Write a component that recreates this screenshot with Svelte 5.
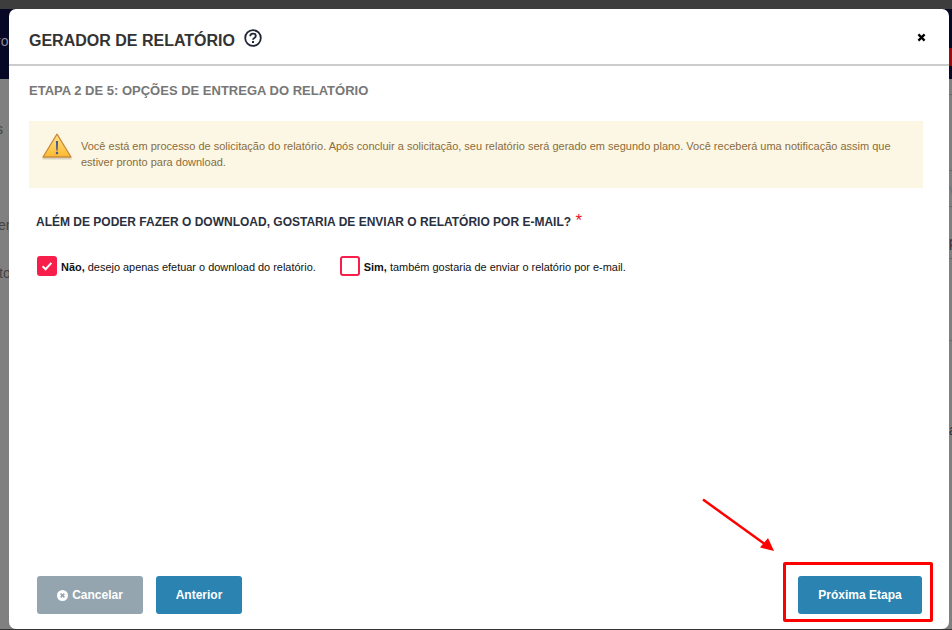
<script>
  const ghosts = [
    { text: 's', cls: 'g-s' },
    { text: 'er', cls: 'g-er' },
    { text: 'to', cls: 'g-to' },
    { text: 'v', cls: 'g-v' },
    { text: 'p', cls: 'g-p' },
    { text: 'a', cls: 'g-a' }
  ];
</script>

<div class="page">
  <div class="topbar"></div>
  <div class="navband">
    <span class="navtext">ro</span>
    <span class="navred"></span>
  </div>
  {#each ghosts as g}
    <span class="ghost {g.cls}">{g.text}</span>
  {/each}
  <span class="rule r1"></span><span class="rule r2"></span><span class="rule r3"></span><span class="rule r4"></span><span class="rule r5"></span>

  <div class="modal">
    <header class="head">
      <div class="title-row">
        <h1>GERADOR DE RELATÓRIO</h1>
        <svg class="help" width="18" height="18" viewBox="0 0 18 18" aria-hidden="true">
          <circle cx="9" cy="9" r="7.8" fill="none" stroke="#1f2535" stroke-width="1.8"/>
          <path d="M6.2 7.2c0-1.7 1.200-2.600 2.800-2.600s2.800.9 2.800 2.300c0 2-2.800 2-2.800 3.800" fill="none" stroke="#1f2535" stroke-width="1.800"/>
          <rect x="8" y="12" width="2" height="2" fill="#1f2535"/>
        </svg>
      </div>
      <svg class="close" width="9" height="9" viewBox="0 0 9 9" aria-hidden="true">
        <path d="M1.4 1.4l6.2 6.2M7.6 1.4L1.4 7.6" stroke="#000" stroke-width="2.3" fill="none"/>
      </svg>
    </header>

    <div class="body">
      <h2>ETAPA 2 DE 5: OPÇÕES DE ENTREGA DO RELATÓRIO</h2>

      <div class="alert">
        <svg class="warn" width="32" height="30" viewBox="0 0 32 30" aria-hidden="true">
          <defs>
            <linearGradient id="wg" x1="0" y1="0" x2="0" y2="1">
              <stop offset="0" stop-color="#ffe48a"/>
              <stop offset="1" stop-color="#fdb92f"/>
            </linearGradient>
          </defs>
          <path d="M1.500 26.500h29" stroke="#d9d2c0" stroke-width="2"/>
          <path d="M16 2.200L30 25H2z" fill="url(#wg)" stroke="#c98a3c" stroke-width="1.300" stroke-linejoin="round"/>
          <path d="M14.900 9h2.200l-.4 9.400h-1.400z" fill="#4a5a8c"/>
          <rect x="14.900" y="19.800" width="2.200" height="2.400" fill="#4a5a8c"/>
        </svg>
        <p>Você está em processo de solicitação do relatório. Após concluir a solicitação, seu relatório será gerado em segundo plano. Você receberá uma notificação assim que estiver pronto para download.</p>
      </div>

      <div class="question">ALÉM DE PODER FAZER O DOWNLOAD, GOSTARIA DE ENVIAR O RELATÓRIO POR E-MAIL? <span class="star">*</span></div>

      <div class="choices">
        <div class="choice">
          <span class="box checked">
            <svg width="12" height="10" viewBox="0 0 12 10" aria-hidden="true">
              <path d="M1.600 5.200l3 3 5.800-6.400" fill="none" stroke="#fff" stroke-width="2"/>
            </svg>
          </span>
          <span class="label"><b>Não,</b> desejo apenas efetuar o download do relatório.</span>
        </div>
        <div class="choice">
          <span class="box"></span>
          <span class="label"><b>Sim,</b> também gostaria de enviar o relatório por e-mail.</span>
        </div>
      </div>
    </div>

    <footer class="foot">
      <div class="left">
        <button class="btn gray">
          <svg width="11" height="11" viewBox="0 0 11 11" aria-hidden="true">
            <circle cx="5.500" cy="5.500" r="5.500" fill="#fff"/>
            <path d="M3.600 3.600l3.800 3.800M7.400 3.600L3.600 7.400" stroke="#95a5af" stroke-width="1.500"/>
          </svg>
          Cancelar
        </button>
        <button class="btn blue prev">Anterior</button>
      </div>
      <button class="btn blue next">Próxima Etapa</button>
    </footer>

    <span class="callout"></span>
    <svg class="arrow" width="80" height="60" viewBox="0 0 80 60" aria-hidden="true">
      <path d="M2 1.500L65 47" stroke="#f00" stroke-width="2.500" fill="none"/>
      <path d="M73 53L59 49.500 67 40z" fill="#f00"/>
    </svg>
  </div>
</div>

<style>
  :global(body) {
    margin: 0;
    background: #808080;
    overflow: hidden;
  }
  .page {
    position: relative;
    width: 952px;
    height: 630px;
    overflow: hidden;
    background: #808080;
    font-family: "Liberation Sans", Arial, sans-serif;
    box-sizing: border-box;
    padding: 9px 3px 1px 9px;
    border-bottom: 1px solid #333;
  }
  .topbar {
    position: absolute;
    left: 0;
    top: 0;
    width: 100%;
    height: 9px;
    background: #3d3d3d;
  }
  .navband {
    position: absolute;
    left: 0;
    top: 9px;
    width: 100%;
    height: 70px;
    background: #070726;
  }
  .navtext {
    position: absolute;
    left: -4px;
    top: 24px;
    font-size: 14px;
    color: #8a8a9a;
  }
  .navred {
    position: absolute;
    right: -10px;
    top: 39px;
    width: 24px;
    height: 18px;
    border-radius: 8px;
    background: #9c0a0a;
  }
  .ghost {
    position: absolute;
    font-size: 14px;
    color: #444;
  }
  .g-s { left: -4px; top: 121px; }
  .g-er { left: -2px; top: 217px; }
  .g-to { left: -1px; top: 265px; }
  .g-v { left: 949px; top: 181px; color: #6b7478; }
  .g-p { left: 949px; top: 234px; color: #333; }
  .g-a { left: 949px; top: 422px; color: #333; }
  .rule {
    position: absolute;
    right: 0;
    width: 3px;
    height: 1px;
    background: #6a6a6a;
  }
  .r1 { top: 94px; }
  .r2 { top: 170px; }
  .r3 { top: 206px; }
  .r4 { top: 258px; }
  .r5 { top: 340px; }

  .modal {
    position: relative;
    width: 940px;
    height: 620px;
    background: #fff;
    border-radius: 7px;
    display: flex;
    flex-direction: column;
    box-sizing: border-box;
  }
  .head {
    display: flex;
    align-items: center;
    justify-content: space-between;
    height: 57px;
    box-sizing: border-box;
    border-bottom: 2px solid #cccccc;
    padding: 0 23px 0 20px;
  }
  .title-row {
    display: flex;
    align-items: center;
    gap: 10px;
    padding-top: 8px;
  }
  h1 {
    margin: 0;
    font-size: 16px;
    line-height: 22px;
    font-weight: 700;
    color: #333;
  }
  .help { display: block; margin-top: -5px; margin-left: -1px; }
  .close { display: block; margin-top: 1px; }
  .body {
    flex: 1;
    padding: 0 26px 0 20px;
  }
  h2 {
    margin: 16px 0 0;
    font-size: 13px;
    line-height: 17px;
    font-weight: 700;
    color: #777;
  }
  .alert {
    display: flex;
    align-items: flex-start;
    gap: 7px;
    margin-top: 22px;
    height: 67px;
    box-sizing: border-box;
    background: #fcf6e4;
    padding: 11px 13px 0 13px;
  }
  .warn { flex: none; margin-top: 0; margin-left: -1px; margin-right: 1px; }
  .alert p {
    margin: 6px 0 0;
    font-size: 11px;
    line-height: 16px;
    color: #8a6d3b;
  }
  .question {
    margin: 26px 0 0 7px;
    font-size: 12px;
    line-height: 17px;
    font-weight: 700;
    color: #2b3040;
  }
  .star { color: #e8142c; font-size: 17px; font-weight: 400; line-height: 12px; margin-left: 1px; }
  .choices {
    display: flex;
    gap: 24px;
    margin: 25px 0 0 8px;
  }
  .choice {
    display: flex;
    align-items: center;
    gap: 4px;
  }
  .box {
    display: flex;
    align-items: center;
    justify-content: center;
    width: 20px;
    height: 20px;
    box-sizing: border-box;
    border: 2px solid #f81e4c;
    border-radius: 3px;
    background: #fff;
  }
  .box.checked { background: #f81e4c; }
  .label {
    font-size: 10.95px;
    color: #111;
    padding-top: 1px;
  }
  .foot {
    display: flex;
    justify-content: space-between;
    align-items: flex-start;
    height: 53px;
    padding: 0 27px 0 28px;
  }
  .left { display: flex; gap: 13px; }
  .btn {
    height: 38px;
    border: 0;
    border-radius: 3px;
    color: #fff;
    font-family: "Liberation Sans", Arial, sans-serif;
    font-size: 12px;
    font-weight: 700;
    display: flex;
    align-items: center;
    justify-content: center;
    gap: 4px;
    padding: 0;
  }
  .gray { width: 106px; background: #95a5af; }
  .blue { background: #2a83b1; }
  .prev { width: 86px; }
  .next { width: 124px; }
  .callout {
    position: absolute;
    left: 774px;
    top: 553px;
    width: 150px;
    height: 60px;
    box-sizing: border-box;
    border: 3px solid #f00;
    border-radius: 2px;
    pointer-events: none;
  }
  .arrow {
    position: absolute;
    left: 692px;
    top: 489px;
    pointer-events: none;
  }
</style>
